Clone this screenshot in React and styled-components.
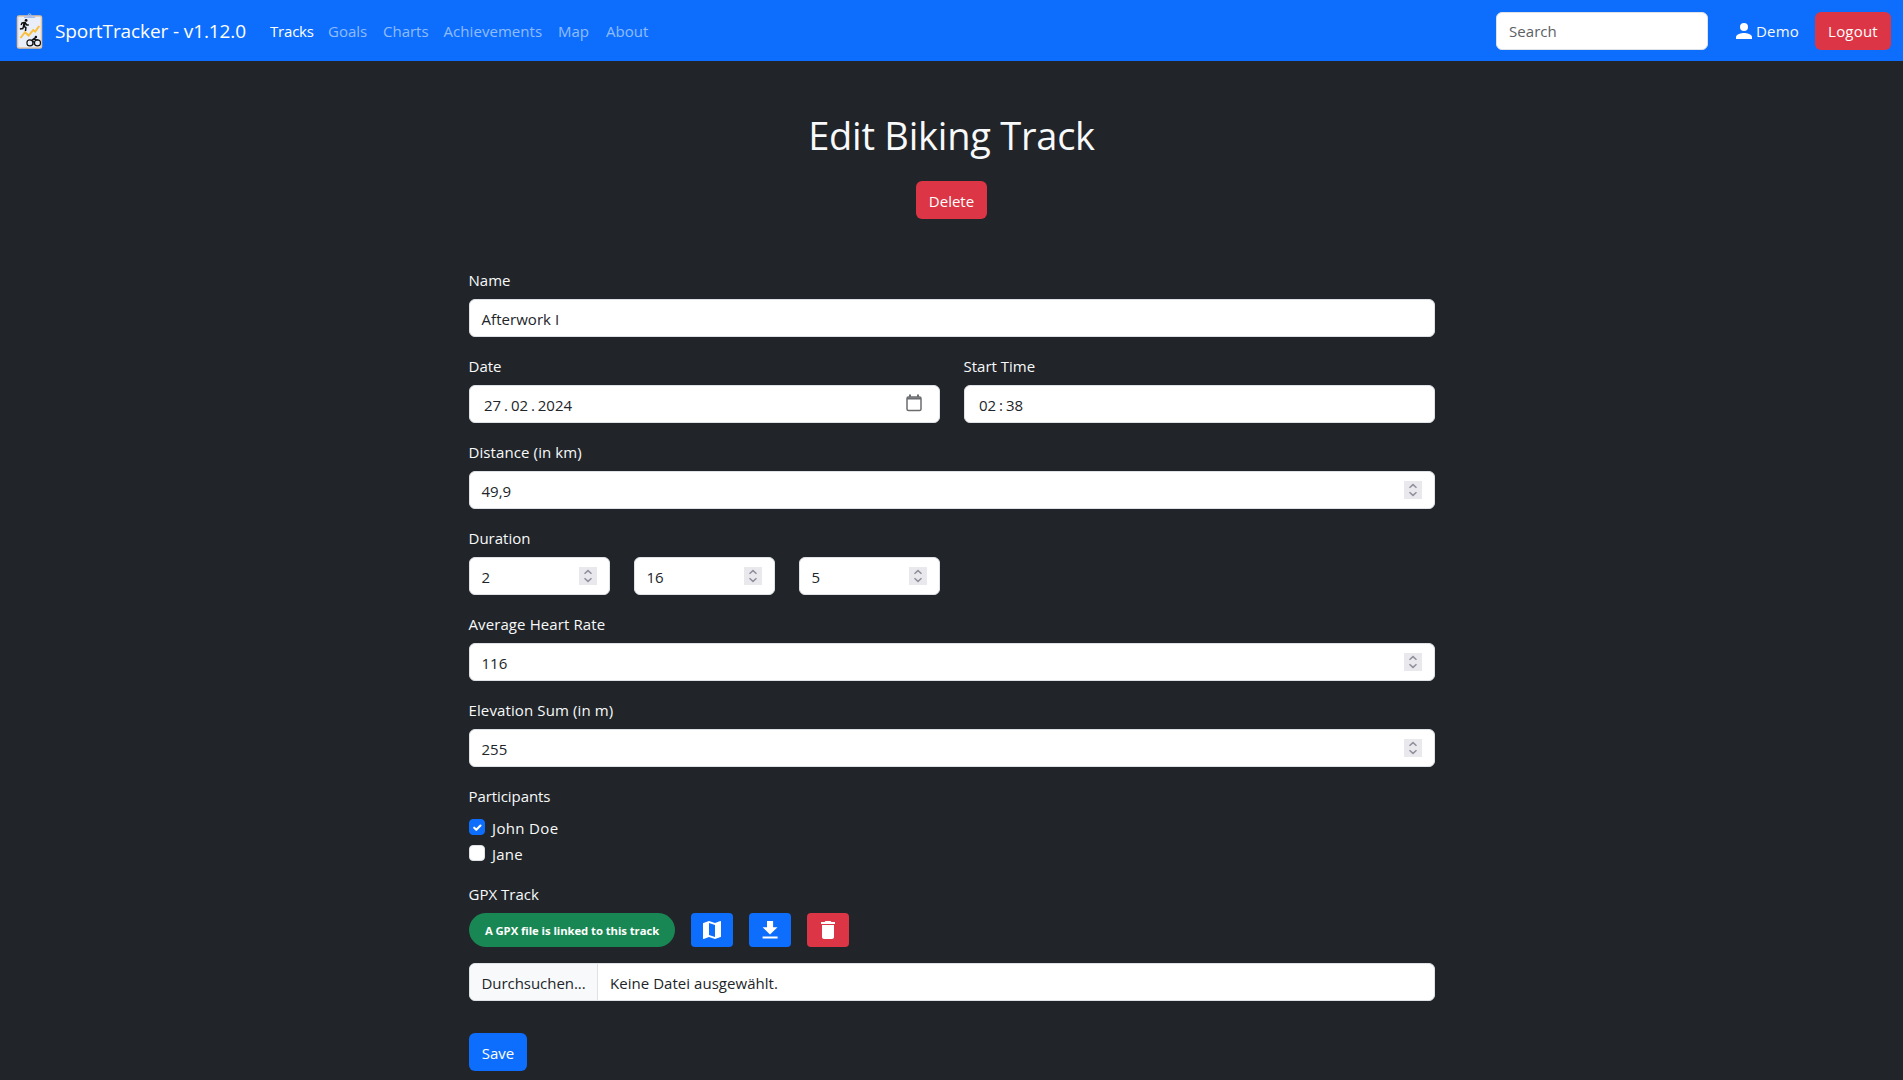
import React from 'react';
import styled, { createGlobalStyle } from 'styled-components';

const Global = createGlobalStyle`
  *, *::before, *::after { box-sizing: border-box; }
  body {
    margin: 0;
    background: #212529;
    color: #f8f9fa;
    font-family: "Open Sans", "Noto Sans", sans-serif;
    font-size: 15px;
    line-height: 24px;
    overflow: hidden;
  }
`;

const Navbar = styled.nav`
  display: flex;
  align-items: center;
  height: 61px;
  padding: 0 12px 0 16px;
  background: #0d6efd;
`;
const Logo = styled.svg`
  width: 27px;
  height: 36px;
  margin-right: 12px;
`;
const Text = styled.span`
  display: inline-block;
  white-space: nowrap;
  letter-spacing: ${(p) => p.$ls || 0}px;
  word-spacing: ${(p) => p.$ws || 0}px;
`;
const Brand = styled.a`
  width: 191px;
  margin-right: 24px;
  color: #fff;
  font-size: 19px;
  line-height: 30px;
`;
const NavLinks = styled.div`
  display: flex;
  flex: 1;
  gap: 16px;
`;
const NavLink = styled.a`
  width: ${(p) => p.$w}px;
  color: ${(p) => (p.$active ? '#fff' : 'rgba(255, 255, 255, 0.55)')};
  white-space: nowrap;
`;
const Search = styled.div`
  width: 212px;
  height: 38px;
  padding: 6px 12px;
  border: 1px solid #dee2e6;
  border-radius: 6px;
  background: #fff;
  color: #5c6064;
`;
const User = styled.div`
  display: flex;
  align-items: center;
  gap: 4px;
  width: 63px;
  margin: 0 16px 0 28px;
  svg { flex: none; }
`;
const Button = styled.button`
  width: ${(p) => p.$w}px;
  height: 38px;
  padding: 1px 0 0;
  border: 0;
  border-radius: 6px;
  background: ${(p) => (p.$danger ? '#dc3545' : '#0d6efd')};
  color: #fff;
  font: inherit;
  white-space: nowrap;
`;
const Header = styled.header`
  display: flex;
  flex-direction: column;
  align-items: center;
  padding-top: 50px;
  h1 {
    margin: 0 0 22px;
    font-size: 38px;
    font-weight: 400;
    line-height: 48px;
  }
`;
const Form = styled.form`
  display: flex;
  flex-direction: column;
  gap: 16px;
  width: 966px;
  margin: 48px 0 0 469px;
`;
const Row = styled.div`
  display: flex;
  gap: ${(p) => p.$gap || 24}px;
`;
const Field = styled.div`
  display: flex;
  flex: 1;
  flex-direction: column;
`;
const Label = styled.label`
  height: 24px;
  margin: 0 0 8px -0.5px;
  padding-top: 1px;
`;
const Box = styled.div`
  display: flex;
  align-items: center;
  justify-content: space-between;
  width: ${(p) => (p.$w ? `${p.$w}px` : '100%')};
  height: 38px;
  padding: 0 12px 0 ${(p) => p.$pl || 11.5}px;
  border: 1px solid #dee2e6;
  border-radius: 6px;
  background: #fff;
  color: #212529;
  > span { padding-top: 1px; }
`;
const Spinner = styled.svg`
  width: 18px;
  height: 18px;
  background: #e9e9ed;
`;
const Calendar = styled.svg`
  width: 16px;
  height: 18px;
  margin: 0 5px 2px 0;
`;
const Check = styled.div`
  display: flex;
  gap: 7px;
  height: 24px;
  margin-bottom: 2px;
  > span { padding-top: 1px; }
`;
const Tick = styled.span`
  display: block;
  width: 16px;
  height: 16px;
  margin-top: 4px;
  border: 1px solid ${(p) => (p.$on ? '#0d6efd' : '#dee2e6')};
  border-radius: 4px;
  background: ${(p) => (p.$on ? '#0d6efd' : '#fff')};
  svg { display: block; margin-top: -1px; }
`;
const Participants = styled(Field)`
  margin-bottom: -2px;
`;
const Pill = styled.span`
  width: 206px;
  height: 34px;
  padding-top: 1px;
  border-radius: 17px;
  background: #198754;
  color: #fff;
  font-size: 11.3px;
  font-weight: 700;
  line-height: 34px;
  text-align: center;
`;
const IconButton = styled.button`
  display: grid;
  place-items: center;
  width: 42px;
  height: 34px;
  padding: 0;
  border: 0;
  border-radius: 4px;
  background: ${(p) => (p.$danger ? '#dc3545' : '#0d6efd')};
`;
const FileInput = styled.div`
  display: flex;
  height: 38px;
  overflow: hidden;
  border: 1px solid #dee2e6;
  border-radius: 6px;
  background: #fff;
  color: #212529;
  line-height: 38px;
`;
const Browse = styled.span`
  width: 128px;
  margin-right: 12px;
  padding-left: 11.5px;
  border-right: 1px solid #dee2e6;
  background: #f8f9fa;
`;
const Actions = styled.div`
  margin-top: 16px;
`;

const Icon = ({ d, size = 24 }) => (
  <svg width={size} height={size} viewBox="0 0 24 24" fill="#fff"><path d={d} /></svg>
);

const Stepper = () => (
  <Spinner viewBox="0 0 18 18" fill="none" stroke="#8f8f9d" strokeWidth="1.5">
    <path d="M5.5 6.8 9 3.6l3.5 3.2M5.5 11.2 9 14.4l3.5-3.2" />
  </Spinner>
);

const NumberField = ({ label, value, ls }) => (
  <Field>
    <Label><Text $ls={ls}>{label}</Text></Label>
    <Box><Text>{value}</Text><Stepper /></Box>
  </Field>
);

const links = [
  ['Tracks', 42, -0.2], ['Goals', 39, 0], ['Charts', 44.5, 0], ['Achievements', 98.5, 0.06], ['Map', 32, 0], ['About', 44, 0.05],
];

const BrandLogo = () => (
  <Logo viewBox="0 0 27 36">
    <rect x="1.5" y="2.9" width="24" height="32" rx="1.5" fill="#e9eef8" stroke="#e3c3a1" strokeWidth="1.5" />
    <path d="M8 5V3.5h4a1.6 1.6 0 0 1 3.2 0h4V5z" fill="#a9bdeb" />
    <circle cx="13.6" cy="2.2" r="1.4" fill="none" stroke="#a9bdeb" />
    <path d="m4.5 25 4.5-5.8 3.6 3.4 4.6-5.4 2 1.4 4-5.6" fill="none" stroke="#fbbf3c" strokeWidth="2" />
    <g fill="none" stroke="#111" strokeWidth="1.5">
      <path d="m9 9.2-1.3 3.9 2.2 1.6-.4 3.3M7.7 13.1l-.9 2.5-2.9.3M9 9.6l-2.9.3-1 2.1M9.3 10l1.5 1.9 2 .1" />
      <path d="m8.9 9-1 4" strokeWidth="2.4" />
      <circle cx="13.9" cy="29.9" r="3" strokeWidth="1.1" />
      <circle cx="21.5" cy="29.9" r="3" strokeWidth="1.1" />
      <path d="m19.5 26-3.8 1.5 2.4 1.8v2.6M16.1 27l2.4-1.9 1.4 1.7h2.2" strokeWidth="1.2" />
    </g>
    <circle cx="10.1" cy="7.4" r="1.4" fill="#111" />
    <circle cx="19.9" cy="24" r="1.2" fill="#111" />
  </Logo>
);

export default function App() {
  return (
    <>
      <Global />
      <Navbar>
        <BrandLogo />
        <Brand><Text $ls={-0.1}>SportTracker - v1.12.0</Text></Brand>
        <NavLinks>
          {links.map(([name, w, ls], i) => (
            <NavLink key={name} $w={w} $active={i === 0}><Text $ls={ls}>{name}</Text></NavLink>
          ))}
        </NavLinks>
        <Search><Text $ls={0.05}>Search</Text></Search>
        <User>
          <svg width="16" height="16" viewBox="0 0 16 16" fill="#fff">
            <circle cx="8" cy="4" r="4" />
            <path d="M0 16v-2c0-2.7 5.3-4 8-4s8 1.3 8 4v2z" />
          </svg>
          <Text $ls={0.2}>Demo</Text>
        </User>
        <Button $danger $w={76}><Text $ls={0.2}>Logout</Text></Button>
      </Navbar>
      <Header>
        <h1><Text $ls={-0.23}>Edit Biking Track</Text></h1>
        <Button $danger $w={71}><Text>Delete</Text></Button>
      </Header>
      <Form>
        <Field>
          <Label><Text>Name</Text></Label>
          <Box><Text $ls={0.05}>Afterwork I</Text></Box>
        </Field>
        <Row>
          <Field>
            <Label><Text>Date</Text></Label>
            <Box $pl={14}>
              <Text $ws={-1}>27 . 02 . 2024</Text>
              <Calendar viewBox="0 0 16 18" fill="none" stroke="#6b6c70" strokeWidth="1.5">
                <rect x="1" y="3" width="14" height="13.5" rx="1.5" />
                <path d="M1 4.5h14M4 .5V3M12 .5V3" strokeWidth="2" />
              </Calendar>
            </Box>
          </Field>
          <Field>
            <Label><Text>Start Time</Text></Label>
            <Box $pl={14}><Text $ws={-1}>02 : 38</Text></Box>
          </Field>
        </Row>
        <NumberField label="Distance (in km)" value="49,9" ls={0.1} />
        <Field>
          <Label><Text>Duration</Text></Label>
          <Row>
            {['2', '16', '5'].map((v) => (
              <Box key={v} $w={141}><Text>{v}</Text><Stepper /></Box>
            ))}
          </Row>
        </Field>
        <NumberField label="Average Heart Rate" value="116" ls={0.1} />
        <NumberField label="Elevation Sum (in m)" value="255" ls={0.12} />
        <Participants>
          <Label><Text $ls={-0.08}>Participants</Text></Label>
          <Check>
            <Tick $on>
              <svg width="14" height="14" viewBox="0 0 20 20" fill="none" stroke="#fff" strokeWidth="3" strokeLinecap="round" strokeLinejoin="round"><path d="m6 11 3 3 6-6" /></svg>
            </Tick>
            <Text $ls={0.35}>John Doe</Text>
          </Check>
          <Check><Tick /><Text $ls={0.2}>Jane</Text></Check>
        </Participants>
        <Field>
          <Label><Text>GPX Track</Text></Label>
          <Row $gap={16}>
            <Pill><Text $ls={-0.06}>A GPX file is linked to this track</Text></Pill>
            <IconButton type="button"><Icon d="m20.5 3-.16.03L15 5.1 9 3 3.36 4.9c-.21.07-.36.25-.36.48V20.5c0 .28.22.5.5.5l.16-.03L9 18.9l6 2.1 5.64-1.9c.21-.07.36-.25.36-.48V3.5c0-.28-.22-.5-.5-.5zM15 19l-6-2.11V5l6 2.11V19z" /></IconButton>
            <IconButton type="button"><Icon d="M19.5 9.2h-4.4V3H9v6.2H4.6L12 16.6zM4.6 18.5v2h15v-2z" /></IconButton>
            <IconButton type="button" $danger><Icon d="M6 19c0 1.1.9 2 2 2h8c1.1 0 2-.9 2-2V7H6v12zM19 4h-3.5l-1-1h-5l-1 1H5v2h14V4z" /></IconButton>
          </Row>
        </Field>
        <FileInput>
          <Browse><Text $ls={-0.05}>Durchsuchen...</Text></Browse>
          <Text $ls={0.04}>Keine Datei ausgewählt.</Text>
        </FileInput>
        <Actions><Button type="button" $w={58}><Text>Save</Text></Button></Actions>
      </Form>
    </>
  );
}
